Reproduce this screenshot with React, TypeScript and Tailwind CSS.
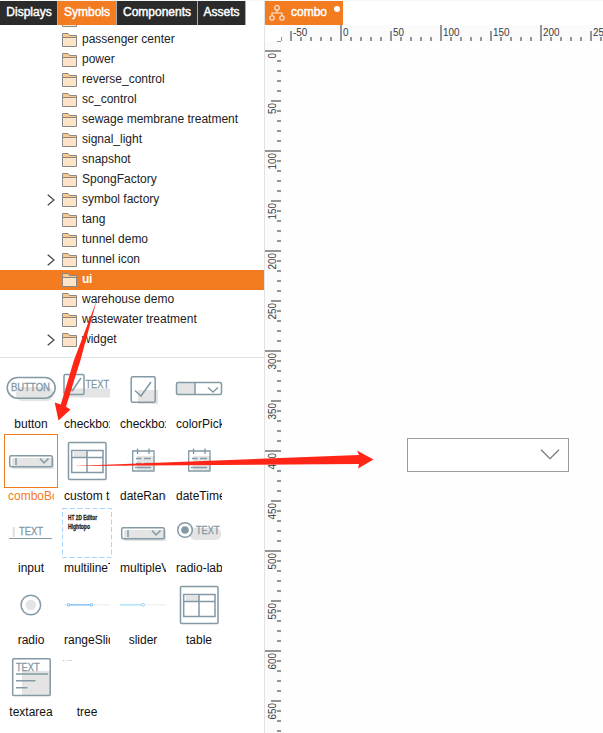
import type { ReactNode } from "react";

const INK = "#8399a5";

const folders: { name: string; expandable?: boolean; selected?: boolean }[] = [
  { name: "passenger center" },
  { name: "power" },
  { name: "reverse_control" },
  { name: "sc_control" },
  { name: "sewage membrane treatment" },
  { name: "signal_light" },
  { name: "snapshot" },
  { name: "SpongFactory" },
  { name: "symbol factory", expandable: true },
  { name: "tang" },
  { name: "tunnel demo" },
  { name: "tunnel icon", expandable: true },
  { name: "ui", selected: true },
  { name: "warehouse demo" },
  { name: "wastewater treatment" },
  { name: "widget", expandable: true },
];

function FolderIcon() {
  return (
    <svg width="16" height="15" viewBox="0 0 16 15" className="block shrink-0">
      <path d="M.5 13.5V.5H6L7.5 2.5H14.5V13.5Z" fill="#fde3c8" />
      <path d="M.5 4.5V.5H6L7.5 2.5H14.5V4.5Z" fill="#fbc88f" />
      <path d="M.5 13.5V.5H6L7.5 2.5H14.5V13.5ZM.5 4.5H14.5" fill="none" stroke="#8b8782" />
    </svg>
  );
}

function TreeRow({ name, expandable, selected }: { name: string; expandable?: boolean; selected?: boolean }) {
  return (
    <div className={`flex h-5 shrink-0 items-start pl-[47px] ${selected ? "bg-[#f37b20] font-bold tracking-[-0.3px] text-white" : "text-[#222]"}`}>
      <div className="w-[15px] pt-1">
        {expandable && (
          <svg width="9" height="12" viewBox="0 0 9 12" className="block">
            <path d="M.7 .8L7 6L.7 11.2" fill="none" stroke="#444" strokeWidth="1.2" />
          </svg>
        )}
      </div>
      <div className="pt-[3px]">
        <FolderIcon />
      </div>
      <span className="pl-1 leading-[18px] whitespace-nowrap">{name}</span>
    </div>
  );
}

function Thumb({ children }: { children: ReactNode }) {
  return (
    <svg width="54" height="54" viewBox="0 0 54 54" className="block" fill="none" stroke={INK} strokeWidth="1.5" fontFamily="Liberation Sans, sans-serif">
      {children}
    </svg>
  );
}

const letters = { fill: INK, stroke: INK, strokeWidth: 0.3, lengthAdjust: "spacingAndGlyphs" as const };
const shade = { fill: "#e4e4e4", stroke: "none" };

const comboThumb = (
  <>
    <rect x="8" y="24" width="42" height="11" rx="1" {...shade} />
    <rect x="5.7" y="21.7" width="42.6" height="11" rx="1.5" />
    <path d="M12 24V31M36 24.5L40 29L44.5 24.5" />
  </>
);

const tableThumb = (
  <>
    <rect x="8.5" y="8.5" width="37.5" height="37" rx="1" />
    <rect x="14" y="18" width="14" height="6" {...shade} />
    <path d="M11.7 16.5H43V38.5H11.7ZM11.7 23.5H43M27 16.5V38.5" />
  </>
);

const dateThumb = (
  <>
    <rect x="21" y="22" width="18" height="14" {...shade} />
    <path d="M16.7 17H38V37H16.7ZM21.5 14.5V20M33 14.5V20M20 24.5H25.5M28 24.5H35M20 29.5H25.5M28 29.5H35M19 33.5H35" strokeWidth="1.3" />
  </>
);

const symbols: { name: string; art: ReactNode; selected?: boolean }[] = [
  {
    name: "button",
    art: (
      <>
        <rect x="12" y="25" width="37" height="14" rx="6" {...shade} />
        <rect x="3.2" y="15.4" width="48" height="20.8" rx="10.4" />
        <text x="7" y="29.2" fontSize="10.5" textLength="39" {...letters}>BUTTON</text>
      </>
    ),
  },
  {
    name: "checkbox-label",
    art: (
      <>
        <rect x="8" y="26.5" width="42" height="9" {...shade} />
        <rect x="4" y="12.5" width="20" height="20" rx="1.5" />
        <path d="M8 24L12.5 28.5L21 16" />
        <text x="25.5" y="25.5" fontSize="10.5" textLength="23.5" {...letters}>TEXT</text>
      </>
    ),
  },
  {
    name: "checkbox",
    art: (
      <>
        <rect x="22" y="28" width="20" height="14" {...shade} />
        <rect x="15.2" y="14.7" width="24" height="25.5" rx="1.5" />
        <path d="M19 28.5L25 34L35 20" />
      </>
    ),
  },
  {
    name: "colorPicker",
    art: (
      <>
        <rect x="5" y="21" width="18" height="11" {...shade} />
        <rect x="4.5" y="20.5" width="45" height="12" rx="1.5" />
        <path d="M23 20.5V32.5M36 25.5L41 30L46 25.5" />
      </>
    ),
  },
  { name: "comboBox", art: comboThumb, selected: true },
  { name: "custom table", art: tableThumb },
  { name: "dateRange", art: dateThumb },
  { name: "dateTime", art: dateThumb },
  {
    name: "input",
    art: (
      <>
        <rect x="8.5" y="21" width="2.5" height="10" {...shade} />
        <text x="15" y="29.2" fontSize="10.5" textLength="24" {...letters}>TEXT</text>
        <path d="M5 32.5H48" strokeWidth="1.1" />
      </>
    ),
  },
  {
    name: "multilineText",
    art: (
      <>
        <rect x="2.5" y="2.5" width="49" height="49" stroke="#a8d3fa" strokeWidth="1" strokeDasharray="5 2.5" />
        <g fill="#222" stroke="#222" strokeWidth=".3" fontSize="7" fontWeight="bold">
          <text x="8" y="14" textLength="29" lengthAdjust="spacingAndGlyphs">HT 2D Editor</text>
          <text x="8" y="23" textLength="22" lengthAdjust="spacingAndGlyphs">Hightopo</text>
        </g>
      </>
    ),
  },
  { name: "multipleView", art: comboThumb },
  {
    name: "radio-label",
    art: (
      <>
        <rect x="18" y="22" width="31" height="12" rx="5" {...shade} />
        <circle cx="13" cy="24" r="7.3" fill="#fff" />
        <circle cx="13" cy="24" r="3.8" fill={INK} stroke="none" />
        <text x="24" y="27.5" fontSize="10.5" textLength="23.5" {...letters}>TEXT</text>
      </>
    ),
  },
  {
    name: "radio",
    art: (
      <>
        <circle cx="26.8" cy="27" r="9.8" />
        <circle cx="26.8" cy="27" r="5.3" {...shade} />
      </>
    ),
  },
  {
    name: "rangeSlider",
    art: (
      <>
        <path d="M4 26.8H50" stroke="#f2f2f2" />
        <path d="M9 26.8H31" stroke="#8cc6fa" />
        <circle cx="8.5" cy="26.8" r="1.3" fill="#fff" stroke="#58a9ef" strokeWidth=".8" />
        <circle cx="31.5" cy="26.8" r="1.3" fill="#fff" stroke="#58a9ef" strokeWidth=".8" />
      </>
    ),
  },
  {
    name: "slider",
    art: (
      <>
        <path d="M27 26.8H50" stroke="#f2f2f2" />
        <path d="M4 26.8H26" stroke="#b5e7fb" strokeWidth="1.7" />
        <circle cx="27" cy="26.8" r="1.5" fill="#fff" stroke="#8ec5f5" strokeWidth=".8" />
      </>
    ),
  },
  { name: "table", art: tableThumb },
  {
    name: "textarea",
    art: (
      <>
        <rect x="18" y="21" width="28" height="24" {...shade} />
        <rect x="8.7" y="8.7" width="37.5" height="36.8" rx="1" />
        <text x="12" y="20.5" fontSize="10.5" textLength="23.5" {...letters}>TEXT</text>
        <path d="M12 24H44M12 30.7H31.5M12 37.7H23.5" />
      </>
    ),
  },
  {
    name: "tree",
    art: <path d="M3 10.5H5M6.5 10.5H8M9 10.5H12" stroke="#a4adb3" strokeWidth=".8" strokeDasharray="1 .7" />,
  },
];

function SymbolCell({ name, art, selected }: { name: string; art: ReactNode; selected?: boolean }) {
  return (
    <div className="flex h-[72px] w-14 flex-col">
      <div className={`h-[54px] w-[54px] ${selected ? "outline-1 -outline-offset-1 outline-[#f37b20]" : ""}`}>
        <Thumb>{art}</Thumb>
      </div>
      <div className={`ml-1 flex h-[17px] w-[46px] overflow-hidden leading-[17px] whitespace-nowrap ${selected ? "text-[#f37b20]" : "text-[#111]"}`}>
        <span className="mx-auto">{name}</span>
      </div>
    </div>
  );
}

function tickSize(value: number) {
  if (value % 100 === 0) return 16;
  return value % 50 === 0 ? 10 : 4;
}

function numeralWidth(value: number) {
  const digits = String(Math.abs(value)).length;
  return digits * 5.5 + (value < 0 ? 3.3 : 0);
}

function TopRuler() {
  const values = Array.from({ length: 33 }, (_, i) => -60 + i * 10);
  return (
    <svg width="322" height="16" className="block shrink-0 bg-[#fbfbfb]" fontFamily="Liberation Sans, sans-serif" fontSize="10">
      {values.map((v) => (
        <g key={v}>
          <rect x={v + 59} y={16 - tickSize(v)} width="2" height={tickSize(v)} fill="#969696" />
          {v % 50 === 0 && (
            <text x={v + 62} y="11" fill="#3a3a3a" textLength={numeralWidth(v)} lengthAdjust="spacingAndGlyphs">{v}</text>
          )}
        </g>
      ))}
    </svg>
  );
}

function SideRuler() {
  const values = Array.from({ length: 70 }, (_, i) => -10 + i * 10);
  return (
    <svg width="16" height="692" className="block shrink-0 bg-[#fbfbfb]" fontFamily="Liberation Sans, sans-serif" fontSize="10">
      {values.map((v) => (
        <g key={v}>
          <rect x={16 - tickSize(v)} y={v + 9} width={tickSize(v)} height="2" fill="#969696" />
          {v % 50 === 0 && (
            <text transform={`translate(11 ${v + 12 + numeralWidth(v)}) rotate(-90)`} fill="#3a3a3a" textLength={numeralWidth(v)} lengthAdjust="spacingAndGlyphs">{v}</text>
          )}
        </g>
      ))}
    </svg>
  );
}

const tabs = [
  { name: "Displays", box: "w-[57px] bg-[#2b2b2b] pl-px" },
  { name: "Symbols", box: "w-[58px] bg-[#f37b20]" },
  { name: "Components", box: "w-[80px] bg-[#2b2b2b]" },
  { name: "Assets", box: "w-[47px] bg-[#2b2b2b]" },
];

export default function App() {
  return (
    <div className="relative flex h-[733px] w-[603px] flex-col overflow-hidden bg-white font-['Liberation_Sans',Arial,sans-serif] text-[12px]">
      <div className="h-px shrink-0 bg-[#f5f6f6]" />
      <div className="flex min-h-0 flex-1">
        <aside className="flex w-[264px] shrink-0 flex-col">
          <nav className="flex h-6 shrink-0">
            <div className="flex gap-px bg-[#aaa] pr-px">
              {tabs.map((t) => (
                <div key={t.name} className={`flex justify-center leading-[22px] text-white [-webkit-text-stroke:0.45px_white] ${t.box}`}>
                  {t.name}
                </div>
              ))}
            </div>
          </nav>
          <div className="flex h-[333px] shrink-0 flex-col overflow-hidden border-b border-[#e0e0e0]">
            <div className="-mt-[15px] shrink-0">
              <TreeRow name="" />
            </div>
            {folders.map((f) => (
              <TreeRow key={f.name} {...f} />
            ))}
          </div>
          <div className="grid grid-cols-[repeat(4,56px)] pt-1 pl-1">
            {symbols.map((s) => (
              <SymbolCell key={s.name} {...s} />
            ))}
          </div>
        </aside>
        <main className="flex min-w-0 flex-1 flex-col border-l border-[#e2e2e2]">
          <div className="flex h-6 shrink-0">
            <div className="flex w-[78px] items-start bg-[#f37b20] pl-1 text-white">
              <svg width="17" height="18" viewBox="0 0 17 18" className="mt-[3px] block shrink-0" fill="none" stroke="#fff" strokeOpacity=".85" strokeWidth="1.1">
                <circle cx="8" cy="3.8" r="2.3" />
                <circle cx="3" cy="14" r="2.2" />
                <circle cx="13" cy="14" r="2.2" />
                <path d="M8 6.2V9M3 11.7V9H13V11.7" />
              </svg>
              <span className="ml-[5px] leading-[22px] [-webkit-text-stroke:0.45px_white]">combo</span>
              <span className="mt-[5px] ml-[7px] h-1.5 w-1.5 shrink-0 rounded-full bg-white" />
            </div>
          </div>
          <div className="flex pl-4">
            <TopRuler />
          </div>
          <div className="flex min-h-0 flex-1">
            <SideRuler />
            <div className="flex-1 bg-[#fefefe] pt-[397px] pl-[126px]">
              <div className="flex h-[34px] w-[162px] items-center justify-end border border-[#9c9c9c] bg-white pr-2 pb-0.5">
                <svg width="20" height="11" viewBox="0 0 20 11" fill="none" stroke="#777" strokeWidth="1.2">
                  <path d="M1 .8L10 9.7L19 .8" />
                </svg>
              </div>
            </div>
          </div>
        </main>
      </div>
      <svg width="603" height="733" className="pointer-events-none absolute inset-0" fill="#ff2517">
        <path d="M96.5 301L80.5 360L66 406.7L70.5 409.5L58.5 420.5L54.7 402.5L60.8 404.5L74 360Z" />
        <path d="M72 466L359 455L357 450.5L373.5 459.5L358 468.5L359 464Z" />
      </svg>
    </div>
  );
}
